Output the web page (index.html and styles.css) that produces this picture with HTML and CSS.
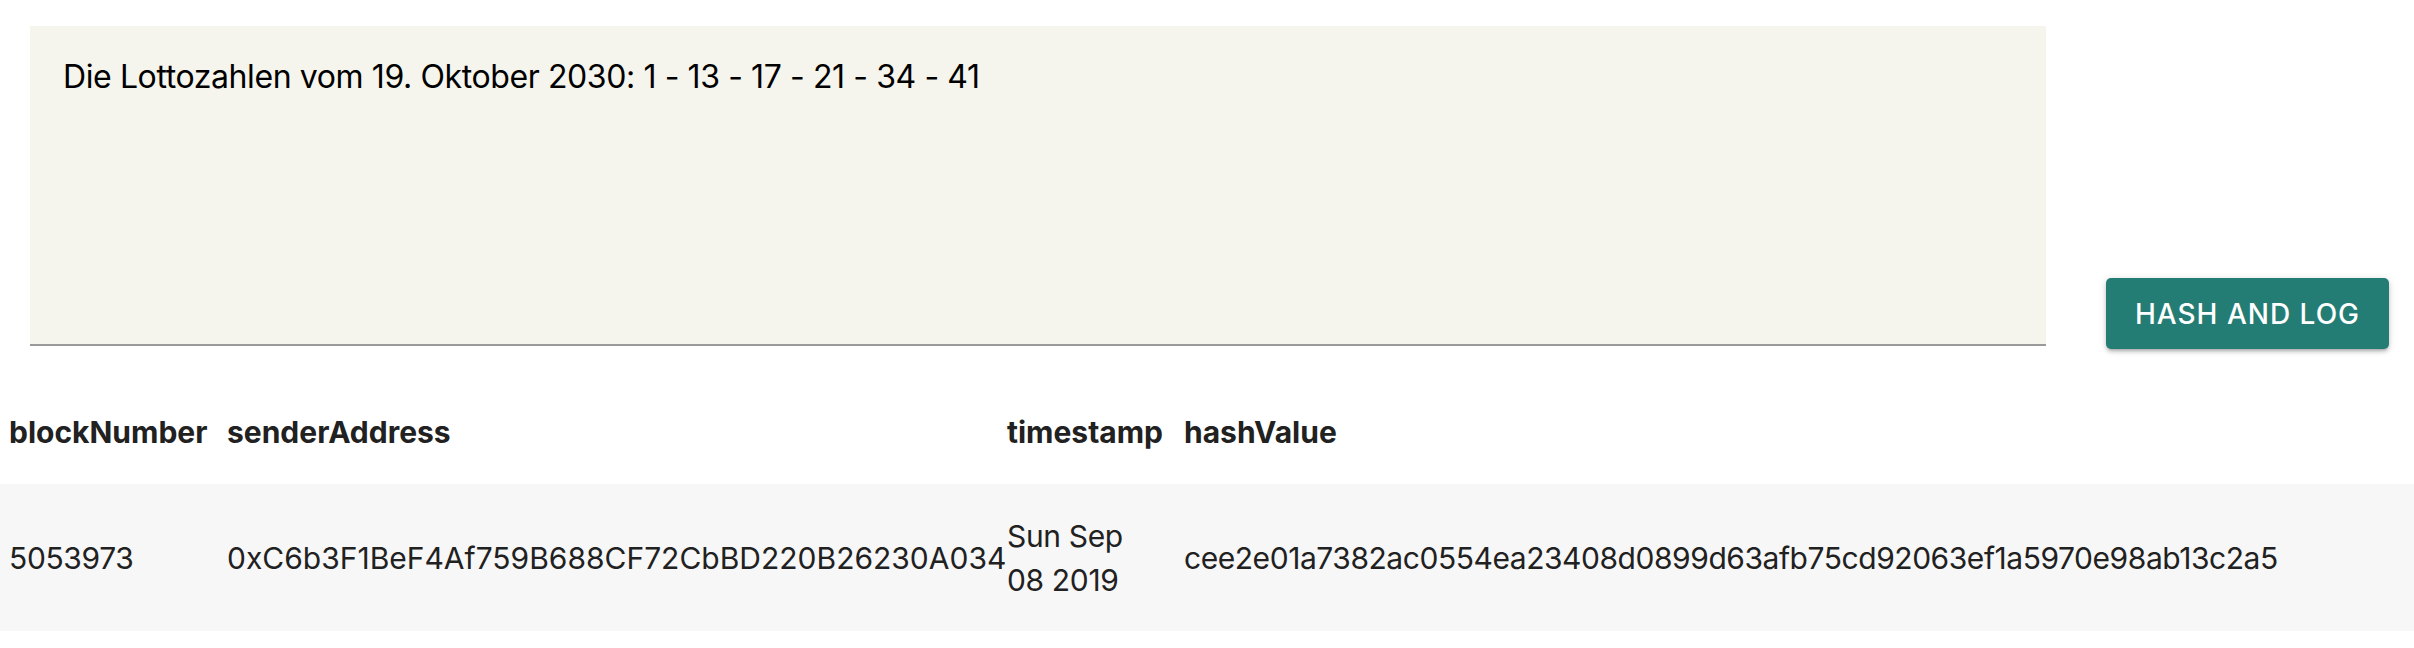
FILE: index.html
```html
<!DOCTYPE html>
<html lang="de">
<head>
<meta charset="utf-8">
<title>Hash and Log</title>
<link rel="stylesheet" href="styles.css">
</head>
<body>
<form class="entry">
  <div class="field">
    <textarea class="field-input">Die Lottozahlen vom 19. Oktober 2030: 1 - 13 - 17 - 21 - 34 - 41</textarea>
  </div>
  <button type="button" class="btn">Hash and Log</button>
</form>
<table class="log">
  <thead>
    <tr>
      <th class="c-block">blockNumber</th>
      <th class="c-sender">senderAddress</th>
      <th class="c-time">timestamp</th>
      <th class="c-hash">hashValue</th>
    </tr>
  </thead>
  <tbody>
    <tr>
      <td>5053973</td>
      <td class="cell-addr">0xC6b3F1BeF4Af759B688CF72CbBD220B26230A034</td>
      <td>Sun Sep 08 2019</td>
      <td class="cell-hash">cee2e01a7382ac0554ea23408d0899d63afb75cd92063ef1a5970e98ab13c2a5</td>
    </tr>
  </tbody>
</table>
</body>
</html>
```

FILE: styles.css
```css
html, body {
  margin: 0;
  padding: 0;
  background: #ffffff;
  font-family: Inter, "Noto Sans", sans-serif;
  color: #212121;
}

.entry {
  display: flex;
  align-items: flex-end;
  gap: 60px;
  padding: 26px 25px 0 30px;
}

.field {
  flex: 1;
  margin-bottom: 3px;
}

.field-input {
  display: block;
  box-sizing: border-box;
  width: 100%;
  height: 320px;
  margin: 0;
  padding: 32px 30px 0 33px;
  border: none;
  border-bottom: 2px solid #9a9a9a;
  border-radius: 0;
  background: #f5f5ee;
  font-family: Inter, "Noto Sans", sans-serif;
  font-size: 32px;
  line-height: 1.21;
  letter-spacing: -0.4px;
  color: #000000;
  resize: none;
  outline: none;
}

.btn {
  flex: none;
  width: 283px;
  height: 71px;
  border: none;
  border-radius: 5px;
  background: #247d74;
  color: #ffffff;
  font-family: Inter, "Noto Sans", sans-serif;
  font-size: 28px;
  font-weight: 500;
  letter-spacing: 1px;
  text-transform: uppercase;
  box-shadow: 0 3px 3px -2px rgba(0,0,0,0.2), 0 3px 4px 0 rgba(0,0,0,0.14), 0 1px 8px 0 rgba(0,0,0,0.12);
  cursor: pointer;
}

.log {
  width: 100%;
  margin-top: 23px;
  border-collapse: collapse;
  table-layout: fixed;
  font-size: 30px;
}

.log th,
.log td {
  padding: 0 16px 0 9px;
  text-align: left;
  vertical-align: middle;
  line-height: 44px;
}

.log th {
  height: 104px;
  padding-top: 8px;
  font-weight: 700;
  color: #212121;
}

.log td {
  height: 147px;
  font-weight: 400;
  letter-spacing: -0.35px;
  color: #212121;
}

.log td.cell-addr {
  letter-spacing: 0;
}

.log td.cell-hash {
  letter-spacing: -0.45px;
}

.log tbody tr {
  background: #f7f7f7;
}

.c-block { width: 193px; }
.c-sender { width: 755px; }
.c-time { width: 152px; }
.c-hash { width: auto; }
```
